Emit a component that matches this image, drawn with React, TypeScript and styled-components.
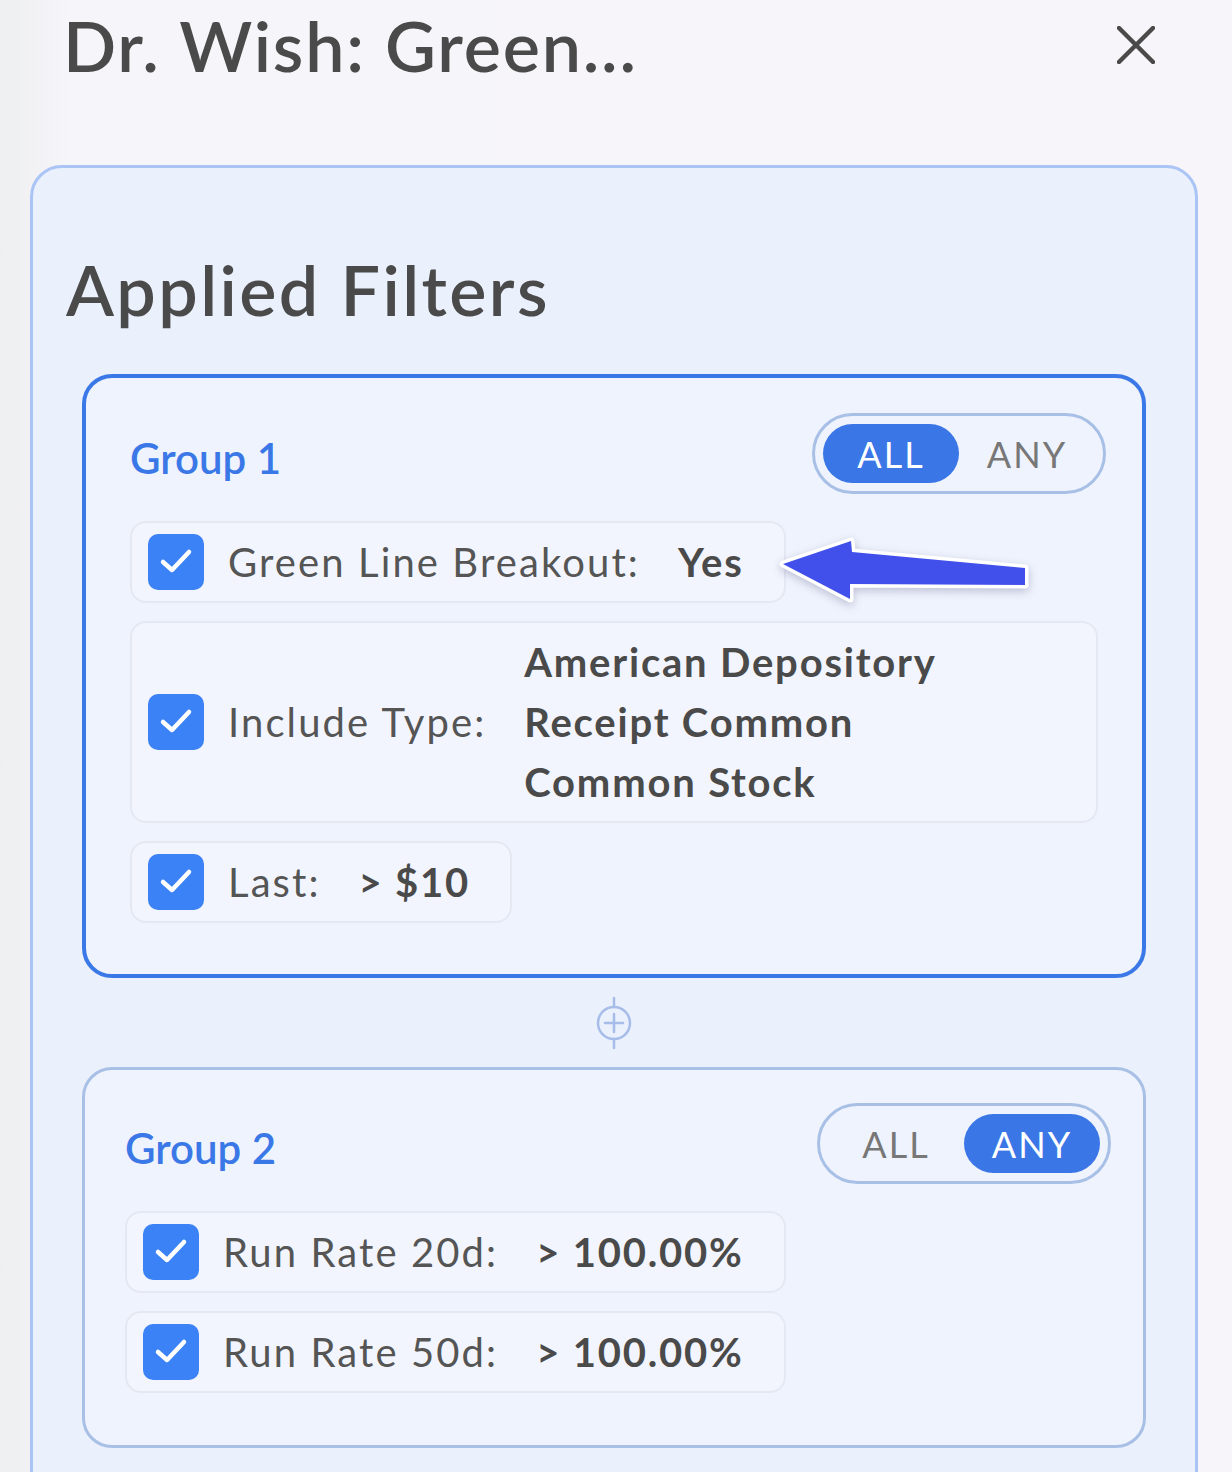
import React from "react";
import styled, { createGlobalStyle } from "styled-components";

const GlobalStyle = createGlobalStyle`
  body {
    margin: 0;
    background: linear-gradient(90deg, #eeeff1 0, #f6f5f9 70px, #f7f5fa 100%);
    font-family: Lato, "Open Sans", sans-serif;
  }
`;

const Page = styled.div`
  width: 1232px;
  height: 1472px;
  overflow: hidden;
  box-sizing: border-box;
  padding: 0 34px 0 30px;
`;

const Header = styled.div`
  display: flex;
  justify-content: space-between;
  align-items: center;
  height: 90px;
  padding: 0 43px 0 33px;
`;

const Title = styled.h1`
  margin: 0;
  font-size: 70px;
  font-weight: 600;
  letter-spacing: 1.8px;
  color: #4a4a4a;
  line-height: 84px;
`;

const CloseButton = styled.button`
  border: 0;
  background: none;
  padding: 0;
  width: 38px;
  height: 38px;
  display: flex;
  cursor: pointer;
`;

const Panel = styled.div`
  margin-top: 75px;
  border: 3px solid #aac4f6;
  border-radius: 32px;
  background: #eaf0fc;
  padding: 80px 49px 80px;
`;

const Heading = styled.h2`
  margin: 0 0 44px -16px;
  font-size: 70px;
  font-weight: 600;
  letter-spacing: 2.4px;
  line-height: 82px;
  color: #4a4a4a;
`;

const GroupCard = styled.div<{ $active?: boolean }>`
  position: relative;
  border: ${(p) => (p.$active ? "4px solid #3b78e7" : "3px solid #a9c0e6")};
  border-radius: 30px;
  background: #eff3fd;
  padding: ${(p) => (p.$active ? "35px 44px 51px" : "33px 40px 52px")};
`;

const GroupHeader = styled.div`
  display: flex;
  justify-content: space-between;
  align-items: center;
  margin-bottom: 27px;
`;

const GroupTitle = styled.div`
  color: #3b78e7;
  font-size: 42px;
  font-weight: 600;
  padding-top: 8px;
`;

const Toggle = styled.div`
  display: flex;
  border: 3px solid #a9c0e6;
  border-radius: 999px;
  padding: 8px;
  margin-right: -8px;
`;

const ToggleOption = styled.div<{ $selected?: boolean }>`
  width: 136px;
  height: 59px;
  border-radius: 30px;
  display: flex;
  align-items: center;
  justify-content: center;
  font-size: 36px;
  letter-spacing: 2px;
  background: ${(p) => (p.$selected ? "#3a76e6" : "transparent")};
  color: ${(p) => (p.$selected ? "#ffffff" : "#777777")};
`;

const ChipList = styled.div`
  display: flex;
  flex-direction: column;
  align-items: flex-start;
  gap: 18px;
`;

const Chip = styled.div`
  display: flex;
  align-items: center;
  gap: 24px;
  max-width: 100%;
  box-sizing: border-box;
  border: 2px solid #e4e8f3;
  border-radius: 16px;
  background: #f2f5fd;
  padding: 9px 40px 9px 16px;
`;

const Checkbox = styled.div`
  width: 56px;
  height: 56px;
  flex-shrink: 0;
  border-radius: 10px;
  background: #3b82f6;
  display: flex;
`;

const Label = styled.div`
  font-size: 40px;
  line-height: 60px;
  letter-spacing: 2.1px;
  color: #555555;
  white-space: nowrap;
`;

const Value = styled.div`
  font-size: 40px;
  line-height: 60px;
  letter-spacing: 1.8px;
  font-weight: 700;
  color: #4a4a4a;
  margin-left: 14px;
`;

const Connector = styled.div`
  height: 89px;
  display: flex;
  align-items: center;
  justify-content: center;
`;

const Pointer = styled.svg`
  position: absolute;
  left: 689px;
  top: 157px;
  filter: drop-shadow(0 3px 4px rgba(40, 40, 90, 0.25));
`;

type Filter = { label: string; value: React.ReactNode };

const group1: Filter[] = [
  { label: "Green Line Breakout:", value: "Yes" },
  {
    label: "Include Type:",
    value: (
      <>
        <div>American Depository Receipt Common</div>
        <div>Common Stock</div>
      </>
    ),
  },
  { label: "Last:", value: "> $10" },
];

const group2: Filter[] = [
  { label: "Run Rate 20d:", value: "> 100.00%" },
  { label: "Run Rate 50d:", value: "> 100.00%" },
];

function Check() {
  return (
    <Checkbox>
      <svg width="56" height="56" viewBox="0 0 56 56">
        <path d="M15 28 L24 36 L41 18" fill="none" stroke="#fff" strokeWidth="4.5" strokeLinecap="round" strokeLinejoin="round" />
      </svg>
    </Checkbox>
  );
}

function FilterChip({ f }: { f: Filter }) {
  return (
    <Chip>
      <Check />
      <Label>{f.label}</Label>
      <Value>{f.value}</Value>
    </Chip>
  );
}

function Group(props: { name: string; mode: "ALL" | "ANY"; active?: boolean; filters: Filter[] }) {
  return (
    <GroupCard $active={props.active}>
      <GroupHeader>
        <GroupTitle>{props.name}</GroupTitle>
        <Toggle>
          <ToggleOption $selected={props.mode === "ALL"}>ALL</ToggleOption>
          <ToggleOption $selected={props.mode === "ANY"}>ANY</ToggleOption>
        </Toggle>
      </GroupHeader>
      <ChipList>
        {props.filters.map((f) => (
          <FilterChip key={f.label} f={f} />
        ))}
      </ChipList>
      {props.active && (
        <Pointer width="260" height="70" viewBox="0 0 260 70">
          <polygon
            points="8,29 76,6 77,17 250,33 250,50 75,49 75,64"
            fill="#4150ea"
            stroke="#fff"
            strokeWidth="7"
            strokeLinejoin="round"
            paintOrder="stroke"
          />
        </Pointer>
      )}
    </GroupCard>
  );
}

export default function App() {
  return (
    <>
      <GlobalStyle />
      <Page>
        <Header>
          <Title>Dr. Wish: Green...</Title>
          <CloseButton aria-label="Close">
            <svg width="38" height="38" viewBox="0 0 38 38">
              <path d="M2 2 L36 36 M36 2 L2 36" stroke="#4a4a4a" strokeWidth="4.5" strokeLinecap="round" />
            </svg>
          </CloseButton>
        </Header>
        <Panel>
          <Heading>Applied Filters</Heading>
          <Group name="Group 1" mode="ALL" active filters={group1} />
          <Connector>
            <svg width="40" height="54" viewBox="0 0 40 54">
              <g stroke="#a6bdea" strokeWidth="2.5" fill="none" strokeLinecap="round">
                <line x1="20" y1="2" x2="20" y2="11" />
                <circle cx="20" cy="27" r="16" />
                <line x1="20" y1="43" x2="20" y2="52" />
                <line x1="11" y1="27" x2="29" y2="27" />
                <line x1="20" y1="18" x2="20" y2="36" />
              </g>
            </svg>
          </Connector>
          <Group name="Group 2" mode="ANY" filters={group2} />
        </Panel>
      </Page>
    </>
  );
}
